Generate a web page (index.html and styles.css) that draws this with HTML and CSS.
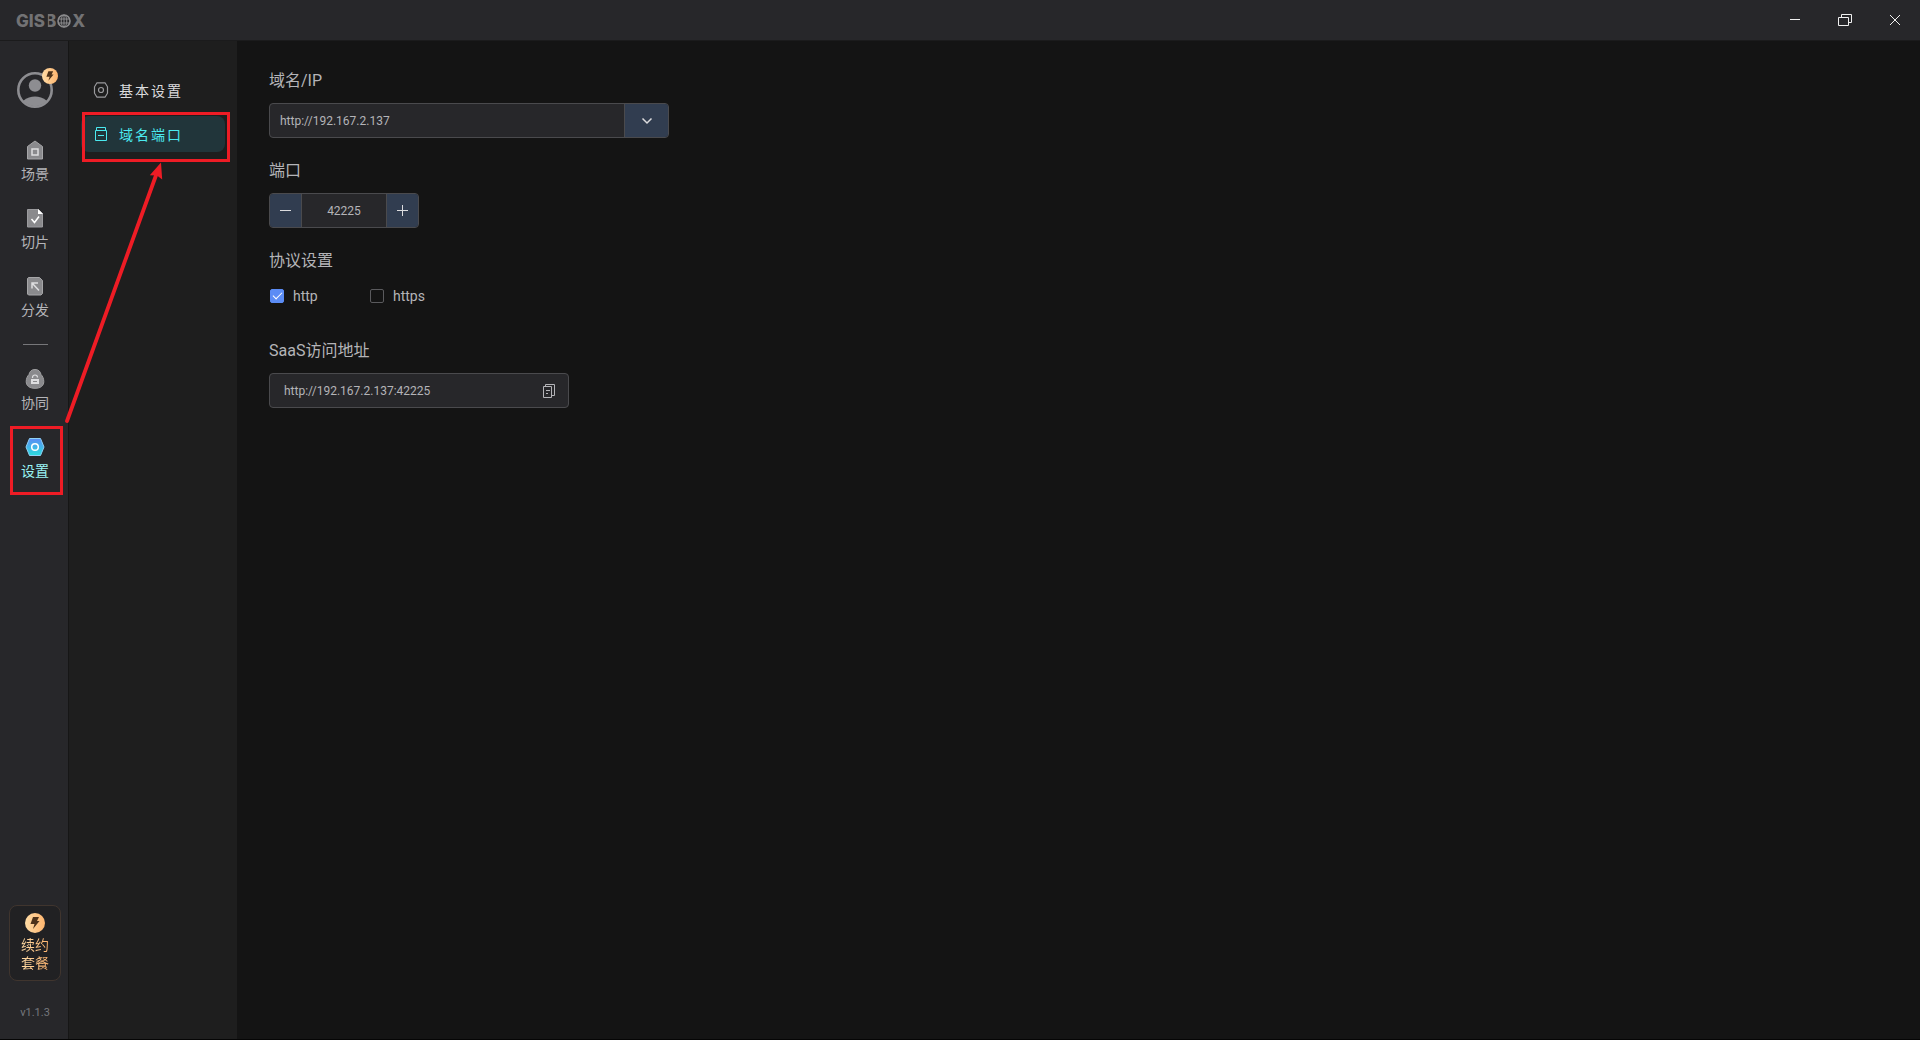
FILE: index.html
```html
<!DOCTYPE html>
<html lang="zh-CN">
<head>
<meta charset="utf-8">
<meta name="viewport" content="width=device-width, initial-scale=1">
<title>GISBOX</title>
<link rel="stylesheet" href="styles.css">
</head>
<body>
<svg class="defs" width="0" height="0" aria-hidden="true">
  <defs>
    <linearGradient id="gold" x1="0" x2="1" y1="0" y2="0"><stop offset="0" stop-color="#ffdca6"/><stop offset="1" stop-color="#ffb56e"/></linearGradient>
    <linearGradient id="aqua" x1="0" x2="0" y1="0" y2="1"><stop offset="0" stop-color="#5b8cf5"/><stop offset="1" stop-color="#2bdcdc"/></linearGradient>
  </defs>
</svg>
<div class="app">
  <header class="titlebar">
    <div class="logo" aria-label="GISBOX">
      <span>GIS</span><span class="logo-b">B</span>
      <svg class="logo-globe" width="14" height="14" viewBox="0 0 14 14" fill="none" stroke="currentColor" stroke-width="1" aria-hidden="true"><circle cx="7" cy="7" r="6" stroke-width="1.6"/><ellipse cx="7" cy="7" rx="2.800" ry="6"/><path d="M7 1v12M1 5h12M1 9h12"/></svg>
      <span>X</span>
    </div>
    <div class="window-buttons">
      <button type="button" aria-label="最小化"><svg width="16" height="16" viewBox="0 0 16 16" fill="none" stroke="currentColor"><path d="M3 7.500h10"/></svg></button>
      <button type="button" aria-label="还原"><svg width="16" height="16" viewBox="0 0 16 16" fill="none" stroke="currentColor"><path d="M1.500 5.500h10v8h-10zM4.500 5.500v-3h10v8h-3"/></svg></button>
      <button type="button" aria-label="关闭"><svg width="16" height="16" viewBox="0 0 16 16" fill="none" stroke="currentColor"><path d="M3 3l10 10M13 3L3 13"/></svg></button>
    </div>
  </header>

  <div class="body">
    <nav class="sidebar">
      <a class="avatar" href="#" aria-label="账户">
        <svg width="36" height="36" viewBox="0 0 36 36" aria-hidden="true"><circle cx="18" cy="18" r="16.700" fill="none" stroke="#8d8d91" stroke-width="2.600"/><circle cx="18" cy="13.500" r="6.200" fill="#8d8d91"/><path d="M6 29C10 25.500 14 24.500 18 24.500s8 1 12 4.500A16.500 16.500 0 0 1 6 29z" fill="#8d8d91"/></svg>
        <svg class="avatar-badge" width="16" height="16" viewBox="0 0 20 20" aria-hidden="true"><circle cx="10" cy="10" r="10" fill="url(#gold)"/><path d="M8 4h6l-2 4h2.500L8 16l1.500-5H5.500z" fill="#4d321a"/></svg>
      </a>
      <a class="nav-item" href="#">
        <svg width="24" height="24" viewBox="0 0 24 24" fill="none"><path d="M4.500 8.500L12 3l7.500 5.500v12.500h-15z" fill="#8a8a8d" stroke="#a6a6a8"/><path d="M9 11h6v6H9z" stroke="#dedee0" stroke-width="1.500"/></svg>
        <span>场景</span>
      </a>
      <a class="nav-item" href="#">
        <svg width="24" height="24" viewBox="0 0 24 24" fill="none"><path d="M4.500 3.500h11l4 4v13.500h-15z" fill="#8a8a8d" stroke="#9b9b9e"/><path d="M15 3l5 5h-5z" fill="#fff"/><path d="M8.500 13l3 3.500 4.500-6" stroke="#fff" stroke-width="1.500"/></svg>
        <span>切片</span>
      </a>
      <a class="nav-item" href="#">
        <svg width="24" height="24" viewBox="0 0 24 24" fill="none"><path d="M5.500 3.500h11l3 3v13l-1.500 1.500H5.500l-1-1v-15.500z" fill="#8a8a8d" stroke="#a6a6a8"/><path d="M9 14.500V9h6M9 9l7 7.500" stroke="#dedee0" stroke-width="1.500"/></svg>
        <span>分发</span>
      </a>
      <hr class="nav-divider">
      <a class="nav-item" href="#">
        <svg width="24" height="24" viewBox="0 0 24 24" fill="none"><path d="M12 2.500c3.500 0 5.500 2 6 5 1.500 1.500 2.800 4 2.800 7 0 4.500-3.300 6.800-8.800 6.800s-8.800-2.300-8.800-6.800c0-3 1.300-5.500 2.800-7 .5-3 2.500-5 6-5z" fill="#8a8a8d" stroke="#a0a0a2"/><path d="M9.500 11V10.500a2.500 2.500 0 0 1 5 0" stroke="#dedee0" stroke-width="1.200"/><path d="M8 12h8v5H8z" fill="#dedee0"/><path d="M10 14.500h4" stroke="#8a8a8d"/></svg>
        <span>协同</span>
      </a>
      <a class="nav-item nav-item-active" href="#" aria-current="page">
        <svg width="24" height="24" viewBox="0 0 24 24" fill="none"><path d="M6.500 3.500h11l3.500 8.500-3.500 8.500h-11L3 12z" fill="url(#aqua)" stroke="#8fd0f5"/><circle cx="12" cy="12" r="3.300" stroke="#fff" stroke-width="1.500"/></svg>
        <span>设置</span>
      </a>
      <button class="renew" type="button">
        <svg width="20" height="20" viewBox="0 0 20 20" aria-hidden="true"><circle cx="10" cy="10" r="10" fill="url(#gold)"/><path d="M8 4h6l-2 4h2.500L8 16l1.500-5H5.500z" fill="#4d321a"/></svg>
        <span>续约<br>套餐</span>
      </button>
      <p class="version">v1.1.3</p>
    </nav>

    <nav class="submenu">
      <a class="submenu-item" href="#">
        <svg width="16" height="16" viewBox="0 0 16 16" fill="none" stroke="currentColor" stroke-width="1.200"><path d="M4 .800h8l2.500 4v6.400L12 15.200H4l-2.500-4V4.800z"/><circle cx="8" cy="8" r="2.500"/></svg>
        <span>基本设置</span>
      </a>
      <a class="submenu-item submenu-item-active" href="#" aria-current="page">
        <svg width="16" height="16" viewBox="0 0 16 16" fill="none" stroke="currentColor"><path d="M2.500 4.500h11v10h-11zM3.500 4.500v-3h9v3M5 9.500h6"/></svg>
        <span>域名端口</span>
      </a>
    </nav>

    <main class="content">
      <div class="field">
        <label class="field-label" for="host">域名/IP</label>
        <div class="control control-host">
          <input id="host" class="host-input" type="text" value="http://192.167.2.137">
          <button class="host-toggle" type="button" aria-label="选择域名"><svg width="14" height="14" viewBox="0 0 14 14" fill="none" stroke="currentColor" stroke-width="1.500"><path d="M2.500 4.500L7 9l4.500-4.500"/></svg></button>
        </div>
      </div>
      <div class="field">
        <label class="field-label" for="port">端口</label>
        <div class="control control-port">
          <button type="button" aria-label="减少"><svg width="14" height="14" viewBox="0 0 14 14" fill="none" stroke="currentColor"><path d="M1 6.500h11"/></svg></button>
          <input id="port" class="port-input" type="text" inputmode="numeric" value="42225">
          <button type="button" aria-label="增加"><svg width="14" height="14" viewBox="0 0 14 14" fill="none" stroke="currentColor"><path d="M1 6.500h11M6.500 1v11"/></svg></button>
        </div>
      </div>
      <fieldset class="field">
        <legend class="field-label">协议设置</legend>
        <div class="checks">
          <label class="check"><input type="checkbox" checked><span>http</span></label>
          <label class="check"><input type="checkbox"><span>https</span></label>
        </div>
      </fieldset>
      <div class="field">
        <label class="field-label" for="saas">SaaS访问地址</label>
        <div class="control control-saas">
          <input id="saas" class="saas-input" type="text" value="http://192.167.2.137:42225" readonly>
          <button class="copy" type="button" aria-label="复制"><svg width="14" height="16" viewBox="0 0 14 16" fill="none" stroke="currentColor"><path d="M1.500 3.500h8v11h-8z"/><path d="M3.500 3.500v-2h9v11h-3M4 7.500h4M4 10.500h2"/></svg></button>
        </div>
      </div>
    </main>
  </div>

  <svg class="annotation" width="240" height="500" viewBox="0 0 240 500" fill="none" stroke="#ee1c25" aria-hidden="true">
    <rect x="83.500" y="113.500" width="145" height="47" stroke-width="3"/>
    <rect x="11.500" y="427.500" width="50" height="66" stroke-width="3"/>
    <path d="M67 421L156.500 174" stroke-width="3.800" stroke-linecap="round"/>
    <path d="M161 162.500l1.200 17-5.200-4-7.200-.3z" fill="#ee1c25" stroke="none"/>
  </svg>
</div>
</body>
</html>
```

FILE: styles.css
```css
:root {
  --panel: #27272a;
  --line: #4a4a4d;
  --text: #b4b4b8;
  --blue: #313d50;
  --ui: Roboto, "Noto Sans CJK SC", sans-serif;
}

* {
  box-sizing: border-box;
}

body {
  margin: 0;
  background: #141414;
  color: var(--text);
  font-family: var(--ui);
  font-size: 14px;
}

a {
  color: inherit;
  text-decoration: none;
}

button,
input {
  margin: 0;
  padding: 0;
  border: 0;
  background: none;
  color: inherit;
  font: inherit;
}

svg {
  display: block;
  flex: none;
}

.defs {
  position: absolute;
}

.app {
  position: relative;
  display: flex;
  flex-direction: column;
  min-height: 100vh;
  border-bottom: 1px solid #050505;
}

/* title bar */
.titlebar {
  display: flex;
  align-items: center;
  justify-content: space-between;
  height: 41px;
  padding-left: 16px;
  background: var(--panel);
  border-bottom: 1px solid #1b1b1c;
}

.logo {
  display: flex;
  align-items: center;
  padding-top: 2px;
  color: #727274;
  font: 800 17px/20px Inter, sans-serif;
}

.logo-b {
  clip-path: inset(0 0 0 3px);
}

.logo-globe {
  margin: 0 1px;
  color: #8b8b8d;
}

.window-buttons {
  display: flex;
  color: #f0f0f0;
}

.window-buttons button {
  display: grid;
  place-items: center;
  width: 50px;
  height: 40px;
}

/* main navigation */
.body {
  display: flex;
  flex: 1;
}

.sidebar {
  display: flex;
  flex-direction: column;
  align-items: center;
  gap: 22px;
  width: 69px;
  padding: 31px 0 16px 2px;
  background: var(--panel);
  border-right: 1px solid #161616;
}

.avatar {
  position: relative;
  margin-bottom: 8px;
}

.avatar-badge {
  position: absolute;
  top: -4px;
  right: -5px;
}

.nav-item {
  display: flex;
  flex-direction: column;
  align-items: center;
  gap: 2px;
  line-height: 20px;
}

.nav-item-active {
  color: #9af5f5;
}

.nav-divider {
  width: 25px;
  height: 1px;
  margin: 2px 0 0;
  border: 0;
  background: #77777a;
}

.renew {
  display: flex;
  flex-direction: column;
  align-items: center;
  gap: 3px;
  width: 52px;
  height: 76px;
  margin-top: auto;
  padding-top: 7px;
  border: 1px solid #40352e;
  border-radius: 8px;
  background: #212123;
  line-height: 18px;
}

.renew span {
  background: linear-gradient(90deg, #ffdca6, #ffb56e);
  background-clip: text;
  color: transparent;
}

.version {
  margin: 0;
  color: #76787d;
  font-size: 11px;
  line-height: 20px;
}

/* settings sections */
.submenu {
  display: flex;
  flex-direction: column;
  gap: 8px;
  width: 168px;
  padding: 31px 12px;
  background: #1e1e1e;
}

.submenu-item {
  display: flex;
  align-items: center;
  gap: 10px;
  height: 36px;
  padding-left: 12px;
  border-radius: 8px;
  color: #dcdcde;
  letter-spacing: 2px;
}

.submenu-item svg {
  color: #9a9a9d;
}

.submenu-item-active,
.submenu-item-active svg {
  color: #4beaf0;
}

.submenu-item-active {
  background: #21353a;
}

/* form */
.content {
  flex: 1;
  padding: 28px 32px;
}

.field {
  min-width: 0;
  height: 90px;
  margin: 0;
  padding: 0;
  border: 0;
}

.field-label {
  display: block;
  margin-bottom: 10px;
  padding: 0;
  font-size: 16px;
  line-height: 24px;
}

.control {
  display: flex;
  height: 35px;
  border: 1px solid var(--line);
  border-radius: 4px;
  background: var(--panel);
  overflow: hidden;
}

.control input {
  flex: 1;
  min-width: 0;
  font-size: 12px;
}

.control-host {
  width: 400px;
}

.control-port {
  width: 150px;
}

.control-saas {
  width: 300px;
}

.host-input {
  padding-left: 10px;
}

.port-input {
  text-align: center;
}

.saas-input {
  padding-left: 14px;
}

.host-toggle,
.control-port button {
  display: grid;
  place-items: center;
  width: 32px;
  background: var(--blue);
  color: #dcdcde;
}

.host-toggle {
  width: 44px;
  border-left: 1px solid var(--line);
}

.control-port button:first-child {
  border-right: 1px solid var(--line);
}

.control-port button:last-child {
  border-left: 1px solid var(--line);
}

.copy {
  display: grid;
  place-items: center;
  width: 38px;
}

.checks {
  display: flex;
  height: 25px;
}

.check {
  display: flex;
  align-items: center;
  gap: 9px;
  width: 100px;
  padding-left: 1px;
}

.check input {
  display: grid;
  place-items: center;
  width: 14px;
  height: 14px;
  border: 1px solid #5a5a5d;
  border-radius: 2px;
  appearance: none;
}

.check input:checked {
  border-color: #5b8cf5;
  background: #5b8cf5;
}

.check input:checked::after {
  content: "";
  width: 8px;
  height: 4px;
  margin-bottom: 2px;
  border: solid #fff;
  border-width: 0 0 1px 1px;
  transform: rotate(-45deg);
}

/* callout marks */
.annotation {
  position: absolute;
  top: 0;
  left: 0;
  pointer-events: none;
}
```
